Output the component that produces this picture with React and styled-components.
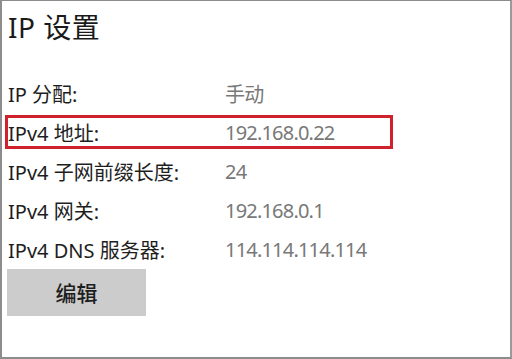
import React from "react";
import styled, { createGlobalStyle } from "styled-components";

const Global = createGlobalStyle`
  html, body { margin: 0; padding: 0; background: #fff; }
  body { font-family: "Noto Sans", "Noto Sans CJK SC", sans-serif; }
`;

const Frame = styled.div`
  box-sizing: border-box;
  width: 512px;
  height: 359px;
  border-top: 1px solid #8c8c8c;
  border-left: 2px solid #8c8c8c;
  border-right: 2px solid #9a9a9a;
  border-bottom: 2px solid #8c8c8c;
  padding: 7px 0 0 3px;
  display: flex;
  flex-direction: column;
  overflow: hidden;
`;

const Title = styled.h1`
  margin: 0 0 30px 3px;
  font-size: 28px;
  font-weight: 400;
  color: #1a1a1a;
  line-height: 38px;
  letter-spacing: 0.5px;
`;

const List = styled.div`
  display: flex;
  flex-direction: column;
  gap: 5px;
`;

const Row = styled.div`
  box-sizing: border-box;
  width: 388px;
  height: 34px;
  padding-left: 3px;
  display: grid;
  grid-template-columns: 217px 1fr;
  align-items: center;
  font-size: 20px;
  box-shadow: ${(p) => (p.$highlight ? "inset 0 0 0 3px #d0222c" : "none")};
`;

const Label = styled.span`
  color: #1e1e1e;
`;

const Value = styled.span`
  color: #787878;
  letter-spacing: -0.8px;
`;

const EditButton = styled.button`
  margin: 3px 0 0 2px;
  width: 139px;
  height: 47px;
  border: none;
  background: #cccccc;
  color: #1e1e1e;
  font-family: "Noto Sans CJK SC", sans-serif;
  font-size: 21px;
  font-weight: 500;
  padding: 0 0 2px;
`;

const rows = [
  ["IP 分配:", "手动"],
  ["IPv4 地址:", "192.168.0.22", true],
  ["IPv4 子网前缀长度:", "24"],
  ["IPv4 网关:", "192.168.0.1"],
  ["IPv4 DNS 服务器:", "114.114.114.114"],
];

export default function App() {
  return (
    <>
      <Global />
      <Frame>
        <Title>IP 设置</Title>
        <List>
          {rows.map(([l, v, h]) => (
            <Row key={l} $highlight={h}>
              <Label>{l}</Label>
              <Value>{v}</Value>
            </Row>
          ))}
        </List>
        <EditButton>编辑</EditButton>
      </Frame>
    </>
  );
}
